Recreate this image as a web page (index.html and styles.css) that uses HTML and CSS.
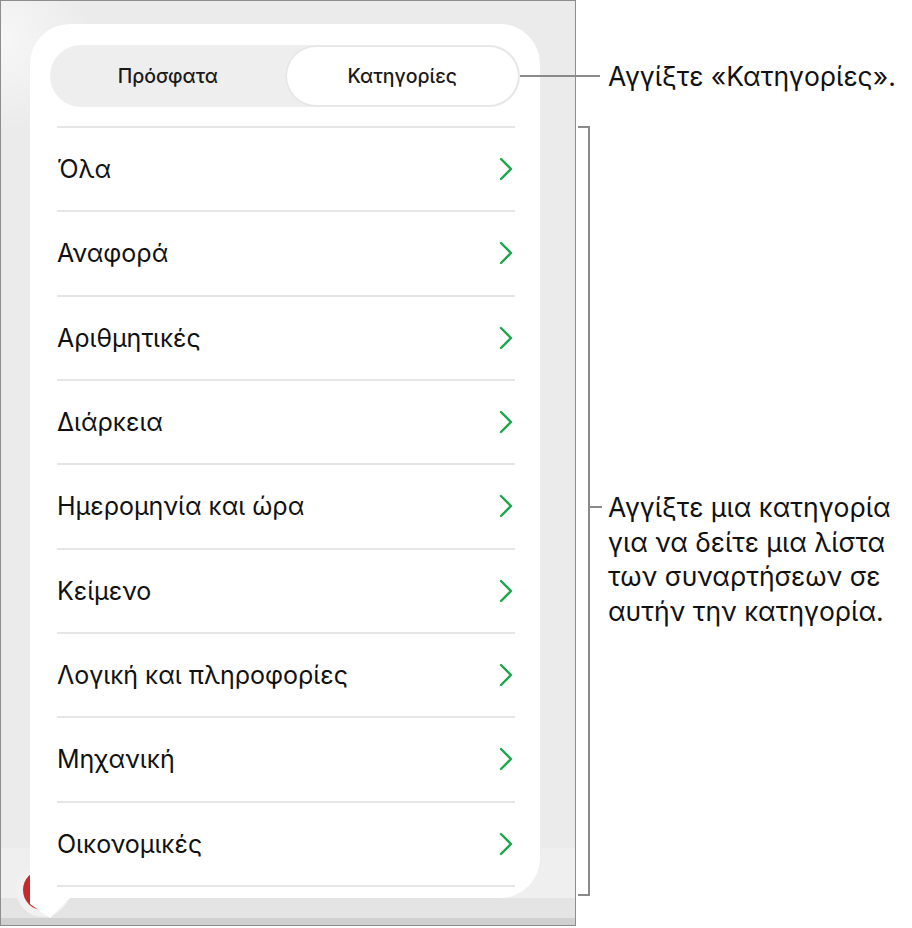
FILE: index.html
```html
<!DOCTYPE html>
<html lang="el">
<head>
    <meta charset="UTF-8">
    <meta name="viewport" content="width=device-width, initial-scale=1.0">
    <title>Κατηγορίες συναρτήσεων</title>
    <link rel="stylesheet" href="styles.css">
</head>
<body>
<div class="figure">
    <div class="device">
        <div class="canvas"></div>
        <div class="toolbar">
            <div class="fab"><span class="fab-dot"></span></div>
        </div>
        <div class="popover">
            <div class="segmented">
                <div class="seg">Πρόσφατα</div>
                <div class="seg active">Κατηγορίες</div>
            </div>
            <ul class="cats">
                <li><span>Όλα</span><svg class="chev" viewBox="0 0 14 24"><path d="M2 2 L12 12 L2 22"/></svg></li>
                <li><span>Αναφορά</span><svg class="chev" viewBox="0 0 14 24"><path d="M2 2 L12 12 L2 22"/></svg></li>
                <li><span>Αριθμητικές</span><svg class="chev" viewBox="0 0 14 24"><path d="M2 2 L12 12 L2 22"/></svg></li>
                <li><span>Διάρκεια</span><svg class="chev" viewBox="0 0 14 24"><path d="M2 2 L12 12 L2 22"/></svg></li>
                <li><span>Ημερομηνία και ώρα</span><svg class="chev" viewBox="0 0 14 24"><path d="M2 2 L12 12 L2 22"/></svg></li>
                <li><span>Κείμενο</span><svg class="chev" viewBox="0 0 14 24"><path d="M2 2 L12 12 L2 22"/></svg></li>
                <li><span>Λογική και πληροφορίες</span><svg class="chev" viewBox="0 0 14 24"><path d="M2 2 L12 12 L2 22"/></svg></li>
                <li><span>Μηχανική</span><svg class="chev" viewBox="0 0 14 24"><path d="M2 2 L12 12 L2 22"/></svg></li>
                <li><span>Οικονομικές</span><svg class="chev" viewBox="0 0 14 24"><path d="M2 2 L12 12 L2 22"/></svg></li>
            </ul>
        </div>
    </div>
    <div class="notes">
        <div class="note-top">
            <span class="leader"></span>
            <p>Αγγίξτε «Κατηγορίες».</p>
        </div>
        <div class="note-list">
            <div class="bracket"></div>
            <div class="note-text">
                <span class="tick"></span>
                <p>Αγγίξτε μια κατηγορία<br>για να δείτε μια λίστα<br>των συναρτήσεων σε<br>αυτήν την κατηγορία.</p>
            </div>
        </div>
    </div>
</div>
</body>
</html>
```

FILE: styles.css
```css
body {
    margin: 0;
    padding: 0;
    background: #fff;
    font-family: Inter, Roboto, "Noto Sans", sans-serif;
    color: #111;
}
.figure {
    display: flex;
    width: 912px;
    height: 928px;
}
.device {
    position: relative;
    width: 574px;
    height: 924px;
    border: 1px solid #8d8d8d;
    background: radial-gradient(circle at 0 40px, #f7f7f7, #ebebeb 90px);
    display: flex;
    flex-direction: column;
    overflow: hidden;
}
.canvas {
    flex: 1;
}
.toolbar {
    height: 77px;
    background: linear-gradient(#efefef 0, #efefef 50px, #e4e4e4 50px, #e4e4e4 70px, #d0d0d0 70px);
}
.fab {
    margin: 15px 0 0 15px;
    width: 54px;
    height: 54px;
    border-radius: 50%;
    background: #f1f1f1;
    display: flex;
    justify-content: center;
    align-items: center;
}
.fab-dot {
    width: 40px;
    height: 40px;
    border-radius: 50%;
    background: #c62a2a;
}
.popover {
    position: absolute;
    left: 29px;
    top: 23px;
    width: 510px;
    height: 874px;
    background: #fff;
    border-radius: 40px 40px 40px 0;
}
.popover::after {
    content: "";
    position: absolute;
    left: 0;
    top: 100%;
    width: 40px;
    height: 20px;
    background: #fff;
    clip-path: polygon(0 0, 0 6px, 20px 20px, 40px 0);
}
.segmented {
    display: flex;
    margin: 21px 20px 0 20px;
    height: 62px;
    padding: 2px;
    box-sizing: border-box;
    border-radius: 31px;
    background: #eeeeee;
}
.seg {
    flex: 1;
    display: flex;
    justify-content: center;
    align-items: center;
    border-radius: 29px;
    font-size: 19.5px;
    font-weight: 500;
    color: #1a1a1a;
}
.seg.active {
    margin-left: 3px;
    background: #fff;
    box-shadow: 0 0 0 1.5px #e6e6e6;
}
.cats {
    list-style: none;
    margin: 19px 25px 0 27px;
    padding: 0;
    border-bottom: 2px solid #e6e6e6;
}
.cats li {
    display: flex;
    justify-content: space-between;
    align-items: center;
    height: 84.33px;
    box-sizing: border-box;
    border-top: 2px solid #e6e6e6;
    padding-right: 2px;
    font-size: 25px;
    color: #111;
}
.chev {
    width: 14px;
    height: 24px;
}
.chev path {
    fill: none;
    stroke: #1aa64b;
    stroke-width: 2.4;
    stroke-linecap: round;
    stroke-linejoin: round;
}
.notes {
    position: relative;
    flex: 1;
    padding-left: 2px;
}
.notes p {
    margin: 0;
    font-size: 26.5px;
    line-height: 34.5px;
    color: #111;
    white-space: nowrap;
}
.note-top {
    display: flex;
    align-items: center;
    height: 36px;
    margin-top: 58px;
    padding-left: 30px;
}
.leader {
    position: absolute;
    left: -56px;
    top: 75px;
    width: 80px;
    height: 2px;
    background: #8a8a8a;
}
.note-list {
    display: flex;
    margin-top: 32px;
}
.bracket {
    width: 10px;
    height: 766px;
    border: 2px solid #8a8a8a;
    border-left: none;
}
.note-text {
    display: flex;
    align-items: flex-start;
    margin-top: 364px;
}
.tick {
    width: 12px;
    height: 2px;
    margin-top: 16px;
    background: #8a8a8a;
}
.note-text p {
    margin-left: 6px;
}
```
